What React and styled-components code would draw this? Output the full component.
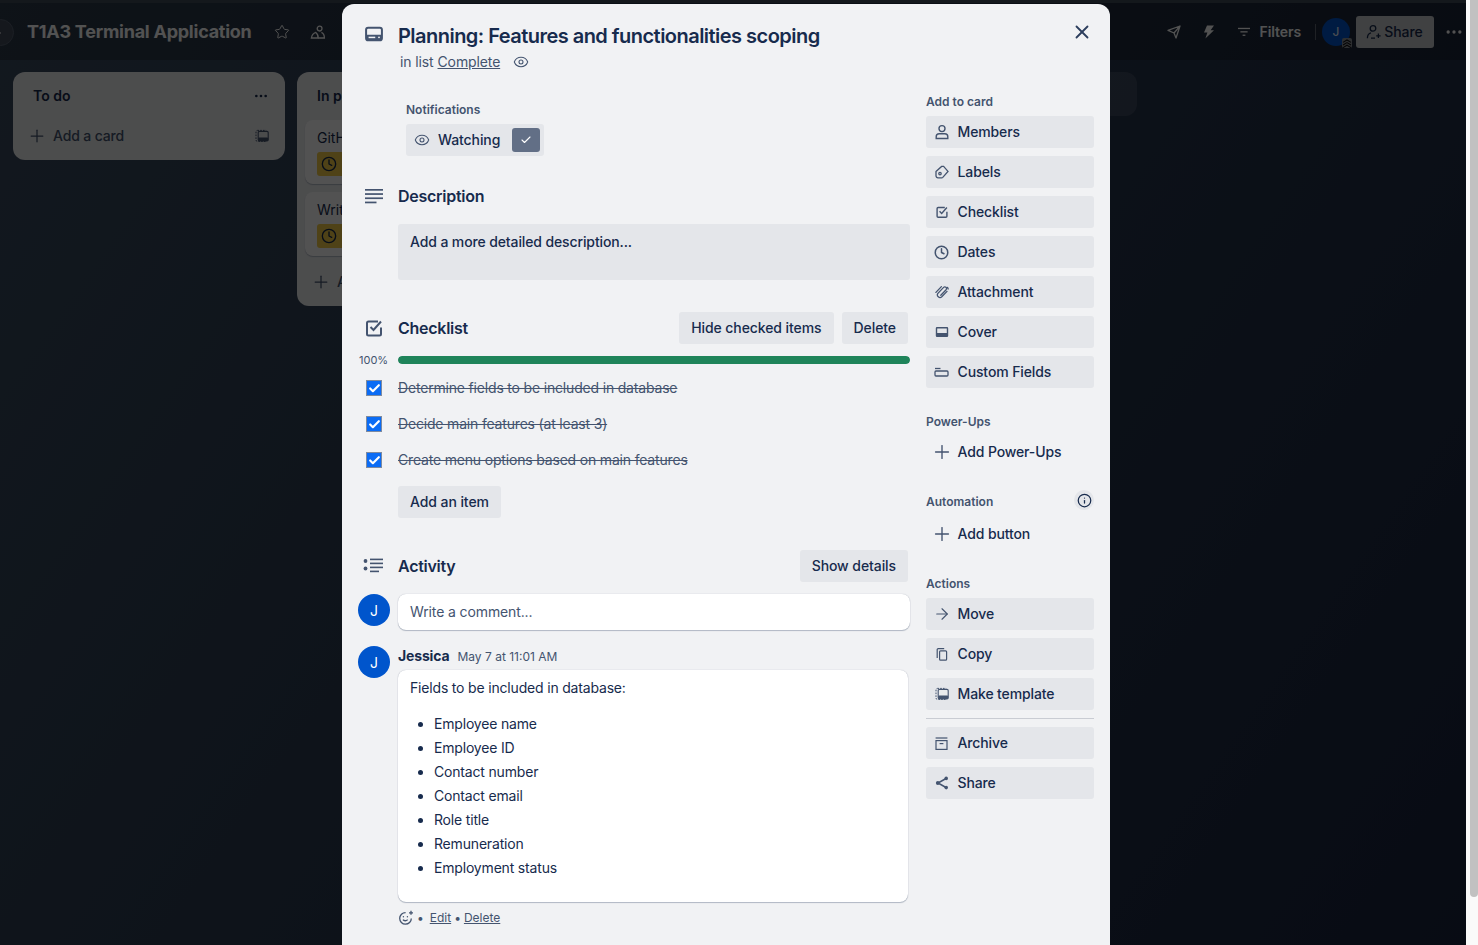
import React from 'react';
import styled, { createGlobalStyle } from 'styled-components';
import { X, Plus, ArrowRight, Ellipsis, Star, Check, Eye, Clock, Info, ChevronRight } from 'lucide-react';

const GlobalStyle = createGlobalStyle`
  html, body {
    margin: 0;
    height: 100%;
    overflow: hidden;
    background: #fafafa;
  }
  body, button {
    font-family: 'Inter', 'Liberation Sans', sans-serif;
  }
  * { box-sizing: border-box; }
  svg { flex: none; }
`;

const Page = styled.div`
  position: relative;
  height: 945px;
  overflow: hidden;
`;

const Board = styled.div`
  width: 1466px;
  height: 945px;
  background: linear-gradient(125deg, #3a4c60, #19253e);
  display: flex;
  flex-direction: column;
  border-top: 3px solid #404b58;
`;

const TopBar = styled.header`
  height: 57px;
  background: rgba(0, 0, 0, 0.22);
  display: flex;
  align-items: center;
  padding: 0 0 0 27px;
  color: #fff;
  flex: none;
`;

const ExpandButton = styled.span`
  position: absolute;
  left: -13px;
  top: 19px;
  width: 27px;
  height: 27px;
  padding-right: 8px;
  border-radius: 50%;
  background: #424c5c;
  border: 1px solid #566070;
  color: #fff;
  display: flex;
  align-items: center;
  justify-content: flex-end;
`;

const BoardTitle = styled.h1`
  margin: 0;
  font-size: 18px;
  line-height: 32px;
  font-weight: 700;
  letter-spacing: -0.25px;
  width: 225px;
  white-space: nowrap;
  color: #fff;
`;

const BarIcons = styled.div`
  display: flex;
  gap: 20px;
  margin-left: 22px;
  align-items: center;
  flex: 1;
`;

const BarRight = styled.div`
  display: flex;
  align-items: center;
  height: 32px;
`;

const BarSpacer = styled.span`
  width: ${p => p.$w}px;
`;

const BarText = styled.span`
  font-size: 14px;
  font-weight: 600;
  letter-spacing: -0.1px;
  margin-left: 10px;
  color: #fff;
`;

const BarDivider = styled.span`
  width: 1px;
  height: 16px;
  background: rgba(255, 255, 255, 0.3);
  margin: 0 6px 0 14px;
`;

const BoardAvatar = styled.span`
  position: relative;
  width: 28px;
  height: 28px;
  border-radius: 50%;
  background: #0055cc;
  color: #fff;
  font-size: 12px;
  display: flex;
  align-items: center;
  justify-content: center;
  margin-right: 6px;
`;

const AvatarBadge = styled.span`
  position: absolute;
  right: -2px;
  bottom: -2px;
  width: 10px;
  height: 10px;
  border-radius: 2px;
  background: #8c9199;
  color: #111;
  display: flex;
`;

const ShareButton = styled.button`
  height: 32px;
  width: 78px;
  border: 0;
  border-radius: 3px;
  background: #c8cacd;
  color: #172b4d;
  font-size: 14px;
  font-weight: 500;
  letter-spacing: -0.1px;
  display: flex;
  align-items: center;
  justify-content: center;
  gap: 2px;
  padding: 0 1px 0 0;
`;

const MoreButton = styled.span`
  display: flex;
  color: #fff;
  margin: 0 2px 0 10px;
`;

const Lists = styled.div`
  display: flex;
  align-items: flex-start;
  gap: 12px;
  padding: 12px 0 0 13px;
`;

const List = styled.section`
  width: 272px;
  flex: none;
  border-radius: 12px;
  background: #eceef0;
  color: #172b4d;
  padding: 0 8px;
`;

const ListHeader = styled.div`
  height: 48px;
  padding: 0 8px 0 12px;
  display: flex;
  align-items: center;
  justify-content: space-between;
  font-size: 14px;
  line-height: 20px;
  font-weight: 600;
`;

const ListFooter = styled.div`
  height: 40px;
  margin: ${p => -p.$pull}px 0 4px;
  padding: 0 8px;
  display: flex;
  align-items: center;
  gap: 8px;
  font-size: 14px;
  line-height: 20px;
  font-weight: 500;
  letter-spacing: -0.15px;
  color: #44546f;
`;

const FooterPlus = styled.span`
  width: 16px;
  display: flex;
  justify-content: center;
`;

const FooterLabel = styled.span`
  flex: 1;
`;

const BoardCard = styled.div`
  background: #fff;
  border-radius: 8px;
  height: 64px;
  margin-bottom: 8px;
  padding: 8px 12px;
  font-size: 14px;
  line-height: 20px;
  white-space: nowrap;
  box-shadow: 0 1px 1px rgba(9, 30, 66, 0.25);
`;

const DueBadge = styled.div`
  margin-top: 4px;
  height: 24px;
  width: 120px;
  border-radius: 3px;
  background: #f5cd47;
  display: flex;
  align-items: center;
  padding: 0 4px;
`;

const GhostList = styled.div`
  width: 266px;
  height: 44px;
  margin-left: 290px;
  border-radius: 12px;
  background: rgba(255, 255, 255, 0.1);
`;

const Overlay = styled.div`
  position: absolute;
  left: 0;
  top: 0;
  width: 1466px;
  height: 945px;
  background: rgba(0, 0, 0, 0.68);
`;

const ScrollThumb = styled.div`
  position: absolute;
  right: 0;
  top: 0;
  width: 8px;
  height: 897px;
  border-radius: 0 0 4px 4px;
  background: #c1c1c1;
`;

const Modal = styled.main`
  position: absolute;
  left: 342px;
  top: 4px;
  width: 768px;
  height: 980px;
  border-radius: 12px;
  background: #f1f2f4;
  color: #172b4d;
`;

const CloseButton = styled.span`
  position: absolute;
  top: 12px;
  right: 12px;
  width: 32px;
  height: 32px;
  display: flex;
  align-items: center;
  justify-content: center;
  color: #2c3e5d;
`;

const ModalHeader = styled.div`
  display: grid;
  grid-template-columns: 40px 1fr;
  padding: 18px 0 0 16px;
  height: 80px;
`;

const HeaderIcon = styled.div`
  display: flex;
  justify-content: center;
  align-items: center;
  width: 32px;
  height: ${p => p.$h || 24}px;
  color: #44546f;
`;

const CardTitle = styled.h2`
  margin: 0;
  font-size: 20px;
  line-height: 28px;
  font-weight: 600;
  letter-spacing: -0.53px;
  color: #172b4d;
`;

const InList = styled.div`
  display: flex;
  align-items: center;
  gap: 4px;
  margin: 2px 0 0 2px;
  font-size: 14px;
  line-height: 20px;
  letter-spacing: -0.12px;
  color: #44546f;
`;

const LinkText = styled.a`
  color: #44546f;
  text-decoration: underline;
`;

const EyeWrap = styled.span`
  display: flex;
  margin-left: 9px;
`;

const Columns = styled.div`
  display: flex;
  gap: 16px;
  padding: 0 16px;
  margin-top: 10px;
`;

const MainColumn = styled.div`
  width: 552px;
  flex: none;
`;

const Sidebar = styled.aside`
  width: 168px;
  flex: none;
  display: flex;
  flex-direction: column;
`;

const Notifications = styled.div`
  margin-left: 48px;
  padding-top: 8px;
  height: 72px;
`;

const SmallLabel = styled.h3`
  margin: 0 0 6px;
  font-size: 12px;
  line-height: 16px;
  font-weight: 600;
  color: #44546f;
`;

const AutomationLabel = styled(SmallLabel)`
  margin: 0;
  padding-top: 4px;
`;

const WatchButton = styled.div`
  width: 138px;
  height: 32px;
  border-radius: 3px;
  background: #e4e6ea;
  display: flex;
  align-items: center;
  padding: 0 4px 0 8px;
  font-size: 14px;
  line-height: 20px;
  font-weight: 500;
  letter-spacing: -0.1px;
  color: #172b4d;
`;

const WatchLabel = styled.span`
  margin-left: 8px;
  flex: 1;
`;

const WatchCheck = styled.span`
  width: 28px;
  height: 24px;
  border-radius: 3px;
  background: #626f86;
  color: #fff;
  display: flex;
  align-items: center;
  justify-content: center;
`;

const Section = styled.section`
  margin-top: ${p => p.$top || 0}px;
`;

const SectionHeader = styled.div`
  display: flex;
  align-items: center;
  height: 32px;
  padding-right: 2px;
`;

const SectionTitle = styled.h3`
  margin: 0 0 0 8px;
  flex: 1;
  font-size: 16px;
  line-height: 20px;
  font-weight: 600;
  letter-spacing: -0.27px;
  color: #172b4d;
`;

const GreyButton = styled.button`
  height: 32px;
  border: 0;
  border-radius: 3px;
  background: #e4e6ea;
  color: #172b4d;
  font-size: 14px;
  line-height: 20px;
  font-weight: 500;
  letter-spacing: -0.08px;
  padding: 0 12px;
  margin-left: 8px;
`;

const DescriptionBox = styled.div`
  margin: 12px 0 0 40px;
  height: 56px;
  border-radius: 3px;
  background: #e4e6ea;
  padding: 8px 12px;
  font-size: 14px;
  line-height: 20px;
  font-weight: 500;
  letter-spacing: -0.12px;
  color: #172b4d;
`;

const ProgressRow = styled.div`
  display: grid;
  grid-template-columns: 40px 1fr;
  align-items: center;
  height: 8px;
  margin-top: 12px;
`;

const Percent = styled.span`
  font-size: 11px;
  line-height: 8px;
  color: #44546f;
  margin-left: 1px;
  white-space: nowrap;
`;

const Track = styled.div`
  height: 8px;
  border-radius: 4px;
  background: #091e420f;
  overflow: hidden;
`;

const Fill = styled.div`
  height: 100%;
  background: #1f845a;
  border-radius: 4px;
`;

const ChecklistItems = styled.ul`
  list-style: none;
  margin: 6px 0 0;
  padding: 0;
`;

const CheckItem = styled.li`
  display: grid;
  grid-template-columns: 40px 1fr;
  align-items: center;
  height: 36px;
`;

const CheckBox = styled.span`
  width: 16px;
  height: 16px;
  margin-left: 8px;
  background: #0b6cf5;
  border: 1px solid #7d8aa0;
  color: #fff;
  display: flex;
  align-items: center;
  justify-content: center;
`;

const DoneText = styled.span`
  font-size: 14px;
  line-height: 20px;
  letter-spacing: -0.18px;
  color: #44546f;
  text-decoration: line-through;
`;

const AddItem = styled(GreyButton)`
  margin: 8px 0 0 40px;
`;

const CommentRow = styled.div`
  display: grid;
  grid-template-columns: 32px 1fr;
  column-gap: 8px;
  margin-top: ${p => p.$top || 0}px;
`;

const Avatar = styled.span`
  width: 32px;
  height: 32px;
  border-radius: 50%;
  background: #0055cc;
  color: #fff;
  font-size: 14px;
  display: flex;
  align-items: center;
  justify-content: center;
`;

const CommentInput = styled.div`
  height: 36px;
  border-radius: 8px;
  background: #fff;
  box-shadow: 0 1px 1px #091e4240, 0 0 1px #091e424f;
  padding: 8px 12px;
  font-size: 14px;
  line-height: 20px;
  letter-spacing: -0.12px;
  color: #44546f;
`;

const CommentMeta = styled.div`
  display: flex;
  align-items: baseline;
  gap: 8px;
  height: 24px;
  line-height: 20px;
`;

const Author = styled.strong`
  font-size: 14px;
  font-weight: 700;
  letter-spacing: -0.15px;
  color: #172b4d;
`;

const Timestamp = styled.span`
  font-size: 12px;
  color: #44546f;
`;

const CommentBody = styled.div`
  width: 510px;
  height: 232px;
  border-radius: 8px;
  background: #fff;
  box-shadow: 0 1px 1px #091e4240, 0 0 1px #091e424f;
  padding: 8px 12px;
  font-size: 14px;
  line-height: 20px;
  letter-spacing: -0.18px;
  color: #172b4d;

  p {
    margin: 0 0 14px;
  }
`;

const Bullets = styled.ul`
  margin: 0;
  padding-left: 24px;

  li {
    height: 24px;
    line-height: 24px;
  }
`;

const CommentActions = styled.div`
  display: flex;
  align-items: center;
  gap: 3px;
  margin-top: 8px;
  font-size: 12px;
  line-height: 16px;
  color: #44546f;
`;

const Dot = styled.span`
  margin-right: ${p => p.$space || 0}px;
`;

const SideButton = styled.div`
  height: 32px;
  border-radius: 3px;
  background: ${p => (p.$plain ? 'transparent' : '#e4e6ea')};
  display: flex;
  align-items: center;
  padding: 0 6px 0 5.5px;
  font-size: 14px;
  line-height: 20px;
  font-weight: 500;
  letter-spacing: -0.12px;
  color: #172b4d;
`;

const SideIcon = styled.span`
  width: 20px;
  height: 16px;
  display: flex;
  align-items: center;
  justify-content: center;
  color: #44546f;
  margin-right: 6px;
`;

const SideSection = styled.div`
  margin-top: ${p => p.$top || 0}px;
`;

const Stack = styled.div`
  display: flex;
  flex-direction: column;
  gap: 8px;
`;

const AutomationHeader = styled.div`
  display: flex;
  align-items: center;
  justify-content: space-between;
  height: 24px;
  margin-bottom: 6px;
`;

const InfoBubble = styled.span`
  width: 20px;
  height: 20px;
  border-radius: 50%;
  background: #e4e6ea;
  color: #172b4d;
  display: flex;
  align-items: center;
  justify-content: center;
`;

const SideDivider = styled.hr`
  width: 100%;
  height: 1px;
  border: 0;
  margin: 8px 0;
  background: #c9ccd3;
`;

const CardIcon = ({ size = 20 }) => (
  <svg width={size} height={size} viewBox="0 0 24 24" fill="none">
    <rect x="2.5" y="4.5" width="19" height="15" rx="2.5" stroke="currentColor" strokeWidth="2.4" />
    <rect x="2.5" y="13" width="19" height="6.5" rx="1.5" fill="currentColor" />
    <rect x="5.5" y="15.2" width="8" height="1.8" fill="#f1f2f4" />
    <circle cx="18" cy="16" r="1.1" fill="#f1f2f4" />
  </svg>
);

const LinesIcon = () => (
  <svg width="20" height="20" viewBox="0 0 20 20" fill="currentColor">
    <rect x="1" y="3" width="18" height="1.7" />
    <rect x="1" y="7.2" width="18" height="1.7" />
    <rect x="1" y="11.4" width="18" height="1.7" />
    <rect x="1" y="15.6" width="11.5" height="1.7" />
  </svg>
);

const ChecklistIcon = ({ size = 20 }) => (
  <svg width={size} height={size} viewBox="0 0 20 20" fill="none" stroke="currentColor" strokeWidth="2">
    <path d="M17 9.5V16a1.5 1.5 0 0 1-1.5 1.5h-11A1.5 1.5 0 0 1 3 16V5a1.5 1.5 0 0 1 1.5-1.5H14" />
    <path d="M6.5 9l3 3 7.5-8.5" />
  </svg>
);

const ActivityIcon = () => (
  <svg width="22" height="20" viewBox="0 0 22 20" fill="currentColor">
    <circle cx="2.5" cy="5" r="1.9" />
    <circle cx="2.5" cy="12.5" r="1.9" />
    <rect x="7" y="2.6" width="13" height="1.6" />
    <rect x="7" y="6.6" width="13" height="1.6" />
    <rect x="7" y="10.6" width="13" height="1.6" />
    <rect x="7" y="14.6" width="9" height="1.6" />
  </svg>
);

const MemberIcon = () => (
  <svg width="14" height="16" viewBox="0 0 14 16" fill="none" stroke="currentColor" strokeWidth="1.4">
    <circle cx="7" cy="4.6" r="3" />
    <path d="M1.2 14.5v-1.7a3 3 0 0 1 3-3h5.6a3 3 0 0 1 3 3v1.7z" />
  </svg>
);

const LabelIcon = () => (
  <svg width="14" height="14" viewBox="0 0 14 14" fill="none" stroke="currentColor" strokeWidth="1.3">
    <path d="M1 6.6 6.6 1.4h2l4.4 5-5.2 6a1.4 1.4 0 0 1-1.2.4H3a2 2 0 0 1-2-2z" />
    <circle cx="5" cy="8.6" r="1.2" />
  </svg>
);

const ClipIcon = () => (
  <svg width="14" height="14" viewBox="0 0 14 14" fill="none" stroke="currentColor" strokeWidth="1.3" strokeLinecap="round">
    <path d="M12 6.4 6.8 11.8a2.6 2.6 0 0 1-3.9-3.4L8.6 2.4a1.7 1.7 0 0 1 2.5 2.3L5.8 10.2" />
    <path d="M6.4 1.6.9 7.4" />
    <path d="M12.6 2.4l.6 1.6" />
  </svg>
);

const CoverIcon = () => (
  <svg width="14" height="12" viewBox="0 0 14 12" fill="currentColor">
    <path d="M2 1h10a1.2 1.2 0 0 1 1.2 1.2v7.6A1.2 1.2 0 0 1 12 11H2A1.2 1.2 0 0 1 .8 9.8V2.2A1.2 1.2 0 0 1 2 1zm.2 1.4V7h9.6V2.4z" fillRule="evenodd" />
  </svg>
);

const FieldsIcon = () => (
  <svg width="15" height="10" viewBox="0 0 15 10" fill="none" stroke="currentColor" strokeWidth="1.3">
    <path d="M1 1.5h5.5" />
    <rect x="1" y="4" width="13" height="5" rx="1" />
  </svg>
);

const CopyIcon = () => (
  <svg width="12" height="13" viewBox="0 0 12 13" fill="none" stroke="currentColor" strokeWidth="1.2">
    <rect x="3.6" y="2.8" width="7" height="9.4" rx="1" />
    <path d="M1.2 10V1.6a1 1 0 0 1 1-1h6" />
  </svg>
);

const TemplateIcon = ({ size = 14 }) => (
  <svg width={size} height={size} viewBox="0 0 14 14" fill="none">
    <rect x="1" y="1.4" width="10.6" height="11" rx="1.4" stroke="currentColor" strokeWidth="1" strokeDasharray="1.6 1.2" />
    <rect x="3.2" y="2.4" width="10" height="9.6" rx="1.2" fill="#e9ebed" stroke="currentColor" strokeWidth="1.1" />
    <rect x="3.2" y="8.6" width="10" height="3.4" rx="1" fill="currentColor" />
  </svg>
);

const ArchiveIcon = () => (
  <svg width="13" height="13" viewBox="0 0 13 13" fill="none" stroke="currentColor" strokeWidth="1.2">
    <path d="M.6 1h11.8" />
    <rect x="1" y="3.6" width="11" height="8.8" />
    <path d="M4.6 6.6h3.8" />
  </svg>
);

const ShareIcon = () => (
  <svg width="14" height="14" viewBox="0 0 14 14" fill="currentColor" stroke="currentColor">
    <path d="M11 2.5 3 7l8 4.5" fill="none" strokeWidth="1.5" />
    <circle cx="2.8" cy="7" r="1.9" strokeWidth="0" />
    <circle cx="11.2" cy="2.4" r="1.8" strokeWidth="0" />
    <circle cx="11.2" cy="11.6" r="1.8" strokeWidth="0" />
  </svg>
);

const SmileIcon = () => (
  <svg width="16" height="16" viewBox="0 0 16 16" fill="none" stroke="currentColor" strokeWidth="1.3">
    <path d="M13.3 8.4A5.8 5.8 0 1 1 7.6 2.6" />
    <path d="M5 9.6c.8 1.5 3.4 1.6 4.6 0" />
    <circle cx="5.4" cy="6.8" r=".7" fill="currentColor" stroke="none" />
    <circle cx="9.4" cy="6.8" r=".7" fill="currentColor" stroke="none" />
    <path d="M13 .8v4M11 2.8h4" />
  </svg>
);

const BoardsIcon = () => (
  <svg width="16" height="16" viewBox="0 0 16 16" fill="none" stroke="currentColor" strokeWidth="1.3">
    <circle cx="9.6" cy="4.6" r="2.4" />
    <path d="M8 14h6.4c0-2.6-1-4.8-3-5.6" />
    <path d="M1.4 14H8c.4-1.6-.4-4-2.2-5.6-1.8.6-4 3-4.4 5.6z" />
  </svg>
);

const RocketIcon = () => (
  <svg width="14" height="14" viewBox="0 0 14 14" fill="none" stroke="currentColor" strokeWidth="1.3" strokeLinejoin="round">
    <path d="M1 5.4 13 1 9 13 7 8 1 5.4zM7 8l6-7" />
  </svg>
);

const BoltIcon = () => (
  <svg width="12" height="14" viewBox="0 0 12 14" fill="currentColor">
    <path d="M4 .6h7L7.6 5.2H11L2.4 13.6l2-6H1z" />
  </svg>
);

const FilterIcon = () => (
  <svg width="12" height="10" viewBox="0 0 12 10" fill="currentColor">
    <rect x="0" y=".8" width="12" height="1.3" />
    <rect x="2.4" y="4.2" width="7.2" height="1.3" />
    <rect x="4.6" y="7.6" width="2.8" height="1.3" />
  </svg>
);

const AddPersonIcon = () => (
  <svg width="16" height="16" viewBox="0 0 16 16" fill="none" stroke="currentColor" strokeWidth="1.3">
    <circle cx="7" cy="4.4" r="2.8" />
    <path d="M1.4 14.2c0-3 1.6-5 3.6-5.4M5 14.2h4M12.4 9.6v4.4M10.2 11.8h4.4" />
  </svg>
);

const ChevronsIcon = () => (
  <svg width="10" height="10" viewBox="0 0 10 10" fill="none" stroke="currentColor" strokeWidth="1.1">
    <path d="M1 4.4 5 2l4 2.4M1 7 5 4.6 9 7M1 9.6l4-2.4 4 2.4" />
  </svg>
);

const addToCard = [
  [<MemberIcon />, 'Members'],
  [<LabelIcon />, 'Labels'],
  [<ChecklistIcon size={14} />, 'Checklist'],
  [<Clock size={15} strokeWidth={2.4} />, 'Dates'],
  [<ClipIcon />, 'Attachment'],
  [<CoverIcon />, 'Cover'],
  [<FieldsIcon />, 'Custom Fields'],
];

const actions = [
  [<ArrowRight size={18} strokeWidth={1.5} />, 'Move'],
  [<CopyIcon />, 'Copy'],
  [<TemplateIcon />, 'Make template'],
];

const checklist = [
  'Determine fields to be included in database',
  'Decide main features (at least 3)',
  'Create menu options based on main features',
];

const fields = [
  'Employee name',
  'Employee ID',
  'Contact number',
  'Contact email',
  'Role title',
  'Remuneration',
  'Employment status',
];

const SideItem = ({ icon, label, plain }) => (
  <SideButton $plain={plain}>
    <SideIcon>{icon}</SideIcon>
    {label}
  </SideButton>
);

export default function App() {
  return (
    <>
      <GlobalStyle />
      <Page>
        <Board>
          <TopBar>
            <ExpandButton><ChevronRight size={12} strokeWidth={2} /></ExpandButton>
            <BoardTitle>T1A3 Terminal Application</BoardTitle>
            <BarIcons>
              <Star size={16} strokeWidth={1.5} />
              <BoardsIcon />
            </BarIcons>
            <BarRight>
              <RocketIcon />
              <BarSpacer $w={22} />
              <BoltIcon />
              <BarSpacer $w={23} />
              <FilterIcon />
              <BarText>Filters</BarText>
              <BarDivider />
              <BoardAvatar>
                J
                <AvatarBadge><ChevronsIcon /></AvatarBadge>
              </BoardAvatar>
              <ShareButton>
                <AddPersonIcon />
                Share
              </ShareButton>
              <MoreButton><Ellipsis size={20} /></MoreButton>
            </BarRight>
          </TopBar>
          <Lists>
            <List>
              <ListHeader>
                To do
                <Ellipsis size={16} />
              </ListHeader>
              <ListFooter $pull={4}>
                <FooterPlus><Plus size={20} strokeWidth={1.5} /></FooterPlus>
                <FooterLabel>Add a card</FooterLabel>
                <TemplateIcon />
              </ListFooter>
            </List>
            <List>
              <ListHeader>In progress</ListHeader>
              <BoardCard>
                GitHub repo
                <DueBadge><Clock size={16} /></DueBadge>
              </BoardCard>
              <BoardCard>
                Write docs
                <DueBadge><Clock size={16} /></DueBadge>
              </BoardCard>
              <ListFooter $pull={2}>
                <FooterPlus><Plus size={20} strokeWidth={1.5} /></FooterPlus>
                <FooterLabel>Add a card</FooterLabel>
              </ListFooter>
            </List>
            <GhostList />
          </Lists>
        </Board>
        <Overlay />
        <ScrollThumb />
        <Modal>
          <CloseButton><X size={22} strokeWidth={2} /></CloseButton>
          <ModalHeader>
            <HeaderIcon><CardIcon /></HeaderIcon>
            <div>
              <CardTitle>Planning: Features and functionalities scoping</CardTitle>
              <InList>
                in list <LinkText>Complete</LinkText>
                <EyeWrap><Eye size={16} strokeWidth={1.6} /></EyeWrap>
              </InList>
            </div>
          </ModalHeader>
          <Columns>
            <MainColumn>
              <Notifications>
                <SmallLabel>Notifications</SmallLabel>
                <WatchButton>
                  <Eye size={16} strokeWidth={1.6} color="#44546f" />
                  <WatchLabel>Watching</WatchLabel>
                  <WatchCheck><Check size={12} strokeWidth={2.2} /></WatchCheck>
                </WatchButton>
              </Notifications>
              <Section $top={14}>
                <SectionHeader>
                  <HeaderIcon $h={32}><LinesIcon /></HeaderIcon>
                  <SectionTitle>Description</SectionTitle>
                </SectionHeader>
                <DescriptionBox>Add a more detailed description...</DescriptionBox>
              </Section>
              <Section $top={32}>
                <SectionHeader>
                  <HeaderIcon $h={32}><ChecklistIcon /></HeaderIcon>
                  <SectionTitle>Checklist</SectionTitle>
                  <GreyButton>Hide checked items</GreyButton>
                  <GreyButton>Delete</GreyButton>
                </SectionHeader>
                <ProgressRow>
                  <Percent>100%</Percent>
                  <Track><Fill style={{ width: '100%' }} /></Track>
                </ProgressRow>
                <ChecklistItems>
                  {checklist.map(item => (
                    <CheckItem key={item}>
                      <CheckBox><Check size={13} strokeWidth={4} /></CheckBox>
                      <DoneText>{item}</DoneText>
                    </CheckItem>
                  ))}
                </ChecklistItems>
                <AddItem>Add an item</AddItem>
              </Section>
              <Section $top={32}>
                <SectionHeader>
                  <HeaderIcon $h={32}><ActivityIcon /></HeaderIcon>
                  <SectionTitle>Activity</SectionTitle>
                  <GreyButton>Show details</GreyButton>
                </SectionHeader>
                <CommentRow $top={12}>
                  <Avatar>J</Avatar>
                  <CommentInput>Write a comment...</CommentInput>
                </CommentRow>
                <CommentRow $top={16}>
                  <Avatar>J</Avatar>
                  <div>
                    <CommentMeta>
                      <Author>Jessica</Author>
                      <Timestamp>May 7 at 11:01 AM</Timestamp>
                    </CommentMeta>
                    <CommentBody>
                      <p>Fields to be included in database:</p>
                      <Bullets>
                        {fields.map(f => <li key={f}>{f}</li>)}
                      </Bullets>
                    </CommentBody>
                    <CommentActions>
                      <SmileIcon />
                      <Dot $space={3}>•</Dot>
                      <LinkText>Edit</LinkText>
                      <Dot>•</Dot>
                      <LinkText>Delete</LinkText>
                    </CommentActions>
                  </div>
                </CommentRow>
              </Section>
            </MainColumn>
            <Sidebar>
              <SmallLabel>Add to card</SmallLabel>
              <Stack>
                {addToCard.map(([icon, label]) => <SideItem key={label} icon={icon} label={label} />)}
              </Stack>
              <SideSection $top={26}>
                <SmallLabel>Power-Ups</SmallLabel>
                <SideItem plain icon={<Plus size={22} strokeWidth={1.5} />} label="Add Power-Ups" />
              </SideSection>
              <SideSection $top={20}>
                <AutomationHeader>
                  <AutomationLabel>Automation</AutomationLabel>
                  <InfoBubble><Info size={15} strokeWidth={2} /></InfoBubble>
                </AutomationHeader>
                <SideItem plain icon={<Plus size={22} strokeWidth={1.5} />} label="Add button" />
              </SideSection>
              <SideSection $top={26}>
                <SmallLabel>Actions</SmallLabel>
                <Stack>
                  {actions.map(([icon, label]) => <SideItem key={label} icon={icon} label={label} />)}
                </Stack>
              </SideSection>
              <SideDivider />
              <Stack>
                <SideItem icon={<ArchiveIcon />} label="Archive" />
                <SideItem icon={<ShareIcon />} label="Share" />
              </Stack>
            </Sidebar>
          </Columns>
        </Modal>
      </Page>
    </>
  );
}
